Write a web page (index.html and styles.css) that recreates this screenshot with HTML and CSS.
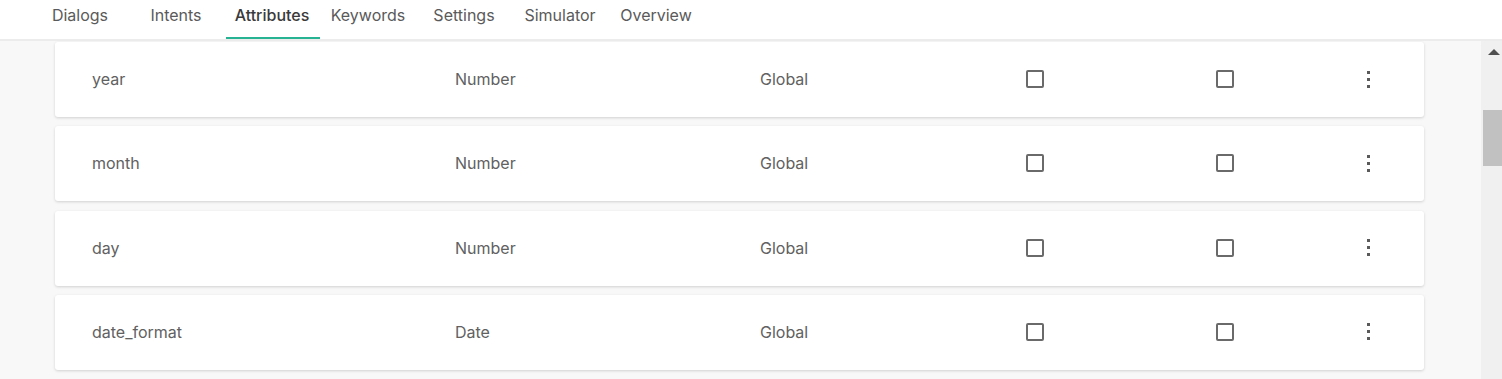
FILE: index.html
```html
<!DOCTYPE html>
<html lang="en">
<head>
<meta charset="UTF-8">
<meta name="viewport" content="width=device-width, initial-scale=1.0">
<title>Attributes</title>
<link rel="stylesheet" href="styles.css">
</head>
<body>
    <div class="header">
        <nav class="tabs">
            <a class="tab">Dialogs</a>
            <a class="tab">Intents</a>
            <a class="tab active">Attributes</a>
            <a class="tab">Keywords</a>
            <a class="tab">Settings</a>
            <a class="tab">Simulator</a>
            <a class="tab">Overview</a>
        </nav>
    </div>

    <div class="main">
        <div class="list">
            <div class="card">
                <span class="name">year</span>
                <span class="type">Number</span>
                <span class="scope">Global</span>
                <span class="checkbox"></span>
                <span class="checkbox"></span>
                <span class="kebab"><i></i><i></i><i></i></span>
            </div>
            <div class="card">
                <span class="name">month</span>
                <span class="type">Number</span>
                <span class="scope">Global</span>
                <span class="checkbox"></span>
                <span class="checkbox"></span>
                <span class="kebab"><i></i><i></i><i></i></span>
            </div>
            <div class="card">
                <span class="name">day</span>
                <span class="type">Number</span>
                <span class="scope">Global</span>
                <span class="checkbox"></span>
                <span class="checkbox"></span>
                <span class="kebab"><i></i><i></i><i></i></span>
            </div>
            <div class="card">
                <span class="name">date_format</span>
                <span class="type">Date</span>
                <span class="scope">Global</span>
                <span class="checkbox"></span>
                <span class="checkbox"></span>
                <span class="kebab"><i></i><i></i><i></i></span>
            </div>
        </div>
        <div class="scrollbar">
            <div class="arrow-up"></div>
            <div class="thumb"></div>
        </div>
    </div>
</body>
</html>
```

FILE: styles.css
```css
body, html {
    margin: 0;
    padding: 0;
    height: 100%;
    overflow: hidden;
}

body {
    font-family: Inter, "Noto Sans", Arial, sans-serif;
    background: #f8f8f8;
    color: #555;
    display: flex;
    flex-direction: column;
}

.header {
    height: 39px;
    background: #fff;
    border-bottom: 2px solid #ececec;
    flex-shrink: 0;
}

.tabs {
    display: flex;
    padding-left: 32px;
    height: 100%;
}

.tab {
    position: relative;
    width: 96px;
    text-align: center;
    font-size: 16px;
    line-height: 31px;
    color: #5a5a5a;
    cursor: pointer;
}

.tab.active {
    color: #3a3a3a;
    font-weight: 500;
}

.tab.active::after {
    content: "";
    position: absolute;
    left: 2px;
    right: 0;
    bottom: 0;
    height: 2px;
    background: #26b394;
}

.main {
    flex: 1;
    display: flex;
    min-height: 0;
}

.list {
    flex: 1;
    padding: 1px 57px 0 55px;
}

.card {
    display: grid;
    grid-template-columns: 363px 305px 266px 190px 151px 3px;
    align-items: center;
    height: 75px;
    box-sizing: border-box;
    margin-bottom: 9.3px;
    padding: 0 0 1px 37px;
    background: #fff;
    border-radius: 3px;
    box-shadow: 0 1px 3px rgba(0, 0, 0, 0.16);
    font-size: 16px;
    color: #616161;
}

.checkbox {
    width: 14px;
    height: 14px;
    border: 2px solid #6a6a6a;
    border-radius: 2px;
}

.kebab {
    display: flex;
    flex-direction: column;
    gap: 4px;
}

.kebab i {
    display: block;
    width: 3px;
    height: 3px;
    background: #5a5a5a;
}

.scrollbar {
    width: 21px;
    background: #f0f0f0;
    padding-top: 8px;
    box-sizing: border-box;
}

.arrow-up {
    width: 0;
    height: 0;
    margin-left: 7px;
    border-left: 6px solid transparent;
    border-right: 6px solid transparent;
    border-bottom: 6px solid #505050;
}

.thumb {
    margin: 55px 0 0 2px;
    height: 56px;
    background: #c1c1c1;
}
```
